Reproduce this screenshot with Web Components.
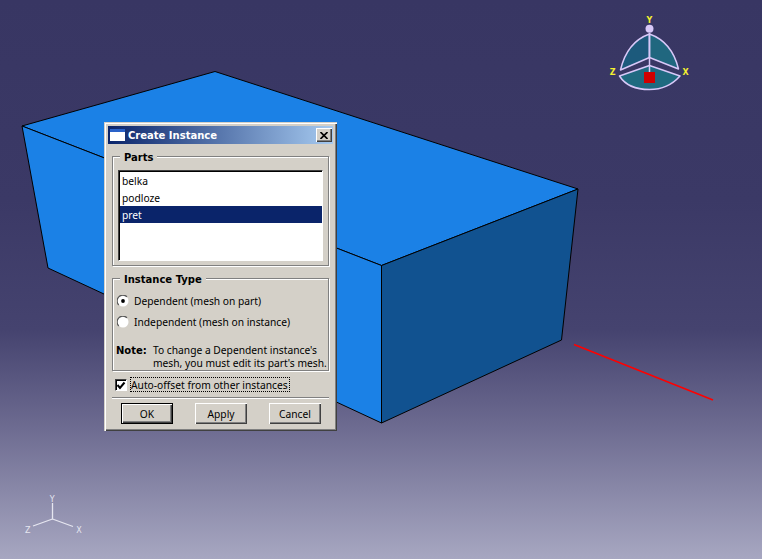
<!DOCTYPE html>
<html>
<head>
<meta charset="utf-8">
<title>Create Instance</title>
<style>
  html, body { margin: 0; padding: 0; background: #383663; }
  body { width: 762px; height: 559px; overflow: hidden; font: 10.25px "Noto Sans", "DejaVu Sans", sans-serif; color: #000; }
</style>
</head>
<body>
<abq-viewport>
  <abq-dialog heading="Create Instance">
    <abq-group label="Parts">
      <abq-list>
        <abq-item>belka</abq-item>
        <abq-item>podloze</abq-item>
        <abq-item selected>pret</abq-item>
      </abq-list>
    </abq-group>
    <abq-group label="Instance Type" class="type">
      <abq-radio checked>Dependent (mesh on part)</abq-radio>
      <abq-radio>Independent (mesh on instance)</abq-radio>
      <abq-note>To change a Dependent instance's<br>mesh, you must edit its part's mesh.</abq-note>
    </abq-group>
    <abq-check checked>Auto-offset from other instances</abq-check>
    <abq-button slot="buttons" default>OK</abq-button>
    <abq-button slot="buttons">Apply</abq-button>
    <abq-button slot="buttons">Cancel</abq-button>
  </abq-dialog>
</abq-viewport>

<script>
const boldFont = 'font: bold 10px "DejaVu Sans", sans-serif;';

class AbqViewport extends HTMLElement {
  constructor() {
    super();
    this.attachShadow({mode: 'open'});
    this.shadowRoot.innerHTML = `
      <style>
        :host { display: block; position: relative; width: 762px; height: 559px; overflow: hidden;
          background: linear-gradient(#383663 0, #3b3966 200px, #45436f 330px, #6a688e 420px, #a7a7c1 559px); }
        svg { position: absolute; left: 0; top: 0; }
        text { font: bold 8px "DejaVu Sans", sans-serif; }
        .small text { font-weight: normal; }
      </style>
      <svg width="762" height="559" viewBox="0 0 762 559">
        <g stroke="#000" stroke-width="1" stroke-linejoin="round">
          <polygon points="22,126 215,71.5 578,189 381.5,265.5" fill="#1b81e6"/>
          <polygon points="22,126 381.5,265.5 381.5,423 48,268" fill="#1b81e6"/>
          <polygon points="381.5,265.5 578,189 561.5,340 381.5,423" fill="#115290"/>
        </g>
        <line x1="574" y1="344.5" x2="713" y2="400" stroke="#f00" stroke-width="1.5"/>

        <g stroke="#d8c8f8" stroke-width="1.5" stroke-linejoin="round">
          <path d="M649.5 34 Q627 42 620.5 70 L649.5 57.5 Z" fill="#1c5a7c"/>
          <path d="M649.5 34 Q672 42 678.5 69 L649.5 57.5 Z" fill="#20677f"/>
          <path d="M619.5 76 L649.5 65.5 L680 76 Q668 89.5 649.5 89.5 Q628 89.5 619.5 76 Z" fill="#1f6a80"/>
          <path d="M649.5 33 V72" fill="none"/>
        </g>
        <circle cx="649.5" cy="28.8" r="4" fill="#d8c8f8"/>
        <rect x="644" y="72" width="11" height="11" fill="#d00000"/>
        <g fill="#f4f030" text-anchor="middle">
          <text x="649.5" y="23">Y</text>
          <text x="612.7" y="75">Z</text>
          <text x="685.7" y="75">X</text>
        </g>

        <g stroke="#e6e6f0" stroke-width="1.3" fill="none">
          <path d="M52.5 503 V519 M52.5 519 L33 526 M52.5 519 L73 526.5"/>
        </g>
        <g class="small" fill="#e6e6f0" text-anchor="middle">
          <text x="52.3" y="501.5">Y</text>
          <text x="27.7" y="533">Z</text>
          <text x="79" y="533">X</text>
        </g>
      </svg>
      <slot></slot>`;
  }
}

const dialogTemplate = document.createElement('template');
dialogTemplate.innerHTML = `
  <style>
    :host { display: block; position: absolute; left: 104px; top: 122px; width: 233px; height: 309px;
      box-sizing: border-box; background: #d4d0c8; padding: 4px 4px 0;
      box-shadow: inset 1px 1px 0 #d4d0c8, inset 2px 2px 0 #fff, inset -1px -1px 0 #404040, inset -2px -2px 0 #808080; }
    .title { display: flex; align-items: center; height: 18px; padding: 0 1px 0 2px; gap: 3px;
      background: linear-gradient(90deg, #0a246a, #a6caf0); color: #fff; ${boldFont} }
    .icon { width: 15px; height: 12px; background: #fff; border-top: 3px solid #2a62c8; box-sizing: border-box; }
    .text { flex: 1; white-space: nowrap; }
    .close { width: 16px; height: 14px; box-sizing: border-box; background: #d4d0c8; display: flex; align-items: center; justify-content: center;
      box-shadow: inset 1px 1px 0 #fff, inset -1px -1px 0 #404040, inset -2px -2px 0 #808080; }
    .body { padding: 12px 4px 0; }
    hr { border: 0; height: 1px; background: #808080; box-shadow: 0 1px 0 #fff; margin: 5px 0 0; }
    .buttons { display: flex; justify-content: space-between; padding: 5px 8px 0 9px; }
  </style>
  <div class="title">
    <span class="icon"></span>
    <span class="text"></span>
    <span class="close"><svg width="8" height="7" viewBox="0 0 8 7"><path d="M0.5 0 L7.5 7 M7.5 0 L0.5 7" stroke="#000" stroke-width="1.6"/></svg></span>
  </div>
  <div class="body">
    <slot></slot>
    <hr>
    <div class="buttons"><slot name="buttons"></slot></div>
  </div>
`;

class AbqDialog extends HTMLElement {
  constructor() {
    super();
    this.attachShadow({mode: 'open'});
    this.shadowRoot.appendChild(dialogTemplate.content.cloneNode(true));
    this.shadowRoot.querySelector('.text').textContent = this.getAttribute('heading');
  }
}

class AbqGroup extends HTMLElement {
  constructor() {
    super();
    this.attachShadow({mode: 'open'});
    this.shadowRoot.innerHTML = `
      <style>
        :host { display: block; position: relative; box-sizing: border-box; margin-bottom: 12px;
          border: 1px solid #808080; box-shadow: 1px 1px 0 #fff, inset 1px 1px 0 #fff; padding: 13px 5px 4px; }
        :host(.type) { height: 93px; padding: 11px 3px 0; margin-bottom: 6px; }
        .label { position: absolute; left: 7px; top: -5px; padding: 0 4px; background: #d4d0c8; line-height: 14px; ${boldFont} }
      </style>
      <span class="label"></span>
      <slot></slot>`;
    this.shadowRoot.querySelector('.label').textContent = this.getAttribute('label');
  }
}

class AbqList extends HTMLElement {
  constructor() {
    super();
    this.attachShadow({mode: 'open'});
    this.shadowRoot.innerHTML = `
      <style>
        :host { display: block; box-sizing: border-box; height: 91px; background: #fff; padding: 1px 0 1px 1px;
          border: 1px solid; border-color: #404040 #fff #fff #404040;
          box-shadow: inset 1px 1px 0 #000; }
      </style>
      <slot></slot>`;
  }
}

class AbqItem extends HTMLElement {
  constructor() {
    super();
    this.attachShadow({mode: 'open'});
    this.shadowRoot.innerHTML = `
      <style>
        :host { display: block; box-sizing: border-box; height: 17px; line-height: 17px; padding: 1px 0 0 2px; }
        :host([selected]) { background: #0a246a; color: #fff; }
      </style>
      <slot></slot>`;
  }
}

class AbqRadio extends HTMLElement {
  constructor() {
    super();
    this.attachShadow({mode: 'open'});
    this.shadowRoot.innerHTML = `
      <style>
        :host { display: flex; align-items: center; height: 21px; gap: 5px; padding-left: 1px; white-space: nowrap; }
        svg { flex: none; }
      </style>
      <svg width="12" height="12" viewBox="0 0 12 12">
        <circle cx="6" cy="6" r="5.5" fill="#fff"/>
        <path d="M1.8 10 A5.5 5.5 0 0 1 10 1.8" fill="none" stroke="#5a5a5a" stroke-width="1.2"/>
        <circle class="dot" cx="6" cy="6" r="1.9" fill="#000"/>
      </svg>
      <span><slot></slot></span>`;
    if (!this.hasAttribute('checked')) this.shadowRoot.querySelector('.dot').remove();
  }
}

class AbqNote extends HTMLElement {
  constructor() {
    super();
    this.attachShadow({mode: 'open'});
    this.shadowRoot.innerHTML = `
      <style>
        :host { display: flex; margin-top: 12px; line-height: 13px; white-space: nowrap; }
        b { width: 37px; flex: none; ${boldFont} line-height: 13px; }
      </style>
      <b>Note:</b><span><slot></slot></span>`;
  }
}

class AbqCheck extends HTMLElement {
  constructor() {
    super();
    this.attachShadow({mode: 'open'});
    this.shadowRoot.innerHTML = `
      <style>
        :host { display: flex; align-items: center; height: 15px; gap: 3px; padding-left: 3px; white-space: nowrap; }
        .box { width: 12px; height: 12px; box-sizing: border-box; background: #fff; flex: none;
          border: 1px solid; border-color: #404040 #fff #fff #404040; box-shadow: inset 1px 1px 0 #000; }
        .label { border: 1px dotted #000; line-height: 14px; width: 160px; box-sizing: border-box; height: 15px; }
      </style>
      <span class="box"><svg width="10" height="10" viewBox="0 0 10 10"><path d="M1.5 4 L4 7 L8.5 1.5" fill="none" stroke="#000" stroke-width="2"/></svg></span>
      <span class="label"><slot></slot></span>`;
  }
}

class AbqButton extends HTMLElement {
  constructor() {
    super();
    this.attachShadow({mode: 'open'});
    this.shadowRoot.innerHTML = `
      <style>
        :host { display: flex; align-items: center; justify-content: center; box-sizing: border-box; width: 52px; height: 21px;
          background: #d4d0c8; box-shadow: inset 1px 1px 0 #fff, inset -1px -1px 0 #404040, inset -2px -2px 0 #808080; }
        :host([default]) { border: 1px solid #000; }
      </style>
      <slot></slot>`;
  }
}

customElements.define('abq-viewport', AbqViewport);
customElements.define('abq-dialog', AbqDialog);
customElements.define('abq-group', AbqGroup);
customElements.define('abq-list', AbqList);
customElements.define('abq-item', AbqItem);
customElements.define('abq-radio', AbqRadio);
customElements.define('abq-note', AbqNote);
customElements.define('abq-check', AbqCheck);
customElements.define('abq-button', AbqButton);
</script>
</body>
</html>
